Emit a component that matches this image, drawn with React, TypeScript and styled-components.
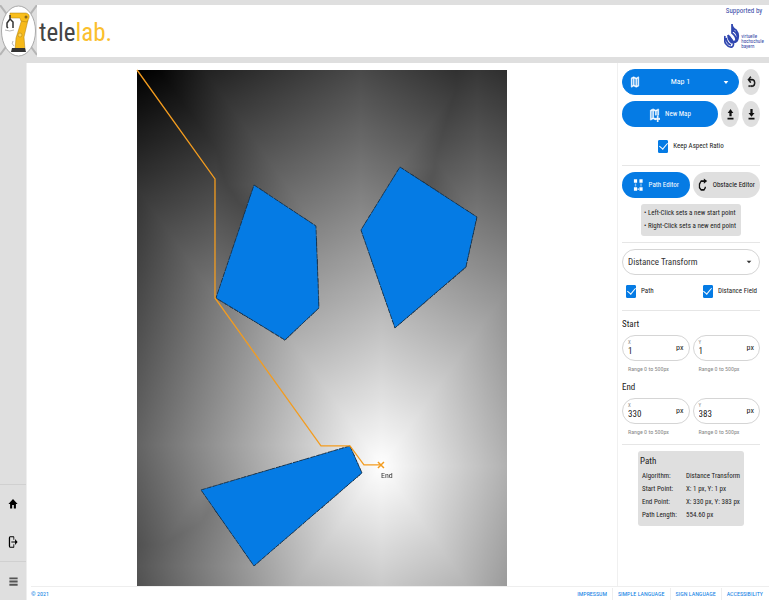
import React, { useLayoutEffect, useRef } from "react";
import styled, { createGlobalStyle } from "styled-components";

const BLUE = "#057be4";
const GREY = "#dfdfdf";
const ORANGE = "#f39c1f";

const Global = createGlobalStyle`
  * { box-sizing: border-box; }
  html, body, #root { height: 100%; margin: 0; }
  body { background: #fff; color: #222; font: 7px/12px "Roboto Condensed", "Liberation Sans Narrow", Roboto, sans-serif; }
  button, input, select { font: inherit; color: inherit; margin: 0; }
`;

const Page = styled.div`
  min-height: 100vh;
  display: flex;
  flex-direction: column;
`;

const Header = styled.header`
  display: flex;
  align-items: stretch;
  height: 63px;
  border-top: 5px solid ${GREY};
  border-bottom: 6px solid ${GREY};
  background: #fff;
`;

const LogoBox = styled.div`
  width: 37px;
  background: ${GREY};
  svg { display: block; width: 100%; height: 100%; }
`;

const Brand = styled.div`
  flex: 1;
  padding: 12px 0 0 2px;
  font-size: 25px;
  line-height: 32px;
  color: #444;
  span { color: #fbc02d; }
`;

const Sponsor = styled.div`
  display: flex;
  flex-direction: column;
  align-items: center;
  width: 44px;
  margin-right: 3px;
  padding-top: 1px;
  color: #3447a5;
  line-height: 11px;
`;

const SponsorRow = styled.div`
  display: flex;
  align-items: center;
  gap: 1px;
  padding-top: 6px;
  font-size: 5px;
  line-height: 5px;
  svg { width: 16px; height: 26px; }
  span { padding-top: 10px; }
`;

const Body = styled.div`
  flex: 1;
  display: flex;
  min-height: 0;
`;

const Sidebar = styled.nav`
  display: flex;
  flex-direction: column;
  justify-content: flex-end;
  width: 27px;
  background: ${GREY};
  border-right: 1px solid #eee;
`;

const SideGroup = styled.div`
  display: flex;
  flex-direction: column;
  border-top: 1px solid #d0d0d0;
`;

const SideButton = styled.button<{ $soft?: boolean }>`
  display: grid;
  place-items: center;
  height: 38px;
  padding: 0;
  border: 0;
  background: none;
  color: ${(p) => (p.$soft ? "#555" : "#000")};
`;

const Content = styled.div`
  flex: 1;
  display: flex;
  flex-direction: column;
  min-width: 0;
`;

const Workspace = styled.div`
  flex: 1;
  display: flex;
`;

const MapArea = styled.main`
  flex: 1;
  display: flex;
  justify-content: center;
  align-items: flex-start;
  padding-top: 7px;
`;

const Stage = styled.div`
  position: relative;
  width: 62.7%;
  aspect-ratio: 370 / 516;
  canvas, svg { position: absolute; inset: 0; width: 100%; height: 100%; display: block; }
  svg { overflow: visible; }
  text { font-size: 8px; fill: #333; }
`;

const Panel = styled.aside`
  width: 152px;
  padding: 6px 9px 0 4px;
  border-left: 1px solid #f0f0f0;
`;

const Section = styled.section<{ $pad: string; $gap?: number }>`
  display: flex;
  flex-direction: column;
  gap: ${(p) => p.$gap || 0}px;
  border-bottom: 1px solid #e6e6e6;
  padding: ${(p) => p.$pad};
`;

const Row = styled.div<{ $justify?: string }>`
  display: flex;
  align-items: center;
  justify-content: ${(p) => p.$justify || "flex-start"};
  gap: 3px;
`;

const Pill = styled.button<{ $plain?: boolean }>`
  flex: 1 1 0;
  display: flex;
  align-items: center;
  justify-content: center;
  gap: 5px;
  height: 26px;
  padding: 0;
  border: 0;
  border-radius: 13px;
  white-space: nowrap;
  background: ${(p) => (p.$plain ? GREY : BLUE)};
  color: ${(p) => (p.$plain ? "#111" : "#fff")};
`;

const RoundButton = styled.button`
  display: grid;
  place-items: center;
  width: 18px;
  height: 26px;
  padding: 0;
  border: 0;
  border-radius: 50%;
  background: ${GREY};
  color: #111;
`;

const SelectBox = styled.div<{ $filled?: boolean }>`
  flex: 1;
  display: flex;
  align-items: center;
  position: relative;
  height: 26px;
  border-radius: 13px;
  border: 1px solid ${(p) => (p.$filled ? BLUE : "#d5d5d5")};
  background: ${(p) => (p.$filled ? BLUE : "#fff")};
  color: ${(p) => (p.$filled ? "#fff" : "#333")};
  select {
    appearance: none;
    width: 100%;
    height: 100%;
    border: 0;
    outline: 0;
    background: none;
    padding: 0 5px;
    font-size: ${(p) => (p.$filled ? 8 : 9)}px;
    text-align-last: ${(p) => (p.$filled ? "center" : "left")};
  }
  svg { position: absolute; pointer-events: none; }
  svg.lead { left: 7px; }
  svg.caret { right: ${(p) => (p.$filled ? 8 : 6)}px; }
`;

const Check = styled.label<{ $inset?: boolean }>`
  display: flex;
  align-items: center;
  gap: 5px;
  height: 26px;
  padding: ${(p) => (p.$inset ? "0 3px 0 4px" : "0")};
  white-space: nowrap;
  input {
    appearance: none;
    display: grid;
    place-items: center;
    width: 10px;
    height: 13px;
    border-radius: 1px;
    border: 1px solid ${BLUE};
  }
  input:checked { background: ${BLUE}; }
  input:checked::after {
    content: "";
    width: 4px;
    height: 7px;
    margin-top: -2px;
    border: solid #fff;
    border-width: 0 1px 1px 0;
    transform: rotate(40deg);
  }
`;

const Hint = styled.ul`
  list-style: none;
  width: 100px;
  margin: 0 auto;
  padding: 3px 0 3px 3px;
  border-radius: 3px;
  background: ${GREY};
  line-height: 13px;
  white-space: nowrap;
`;

const Heading = styled.h3`
  margin: 0;
  font-size: 9px;
  font-weight: 400;
  line-height: 12px;
`;

const Fields = styled.div`
  display: flex;
  gap: 3px;
  margin: 5px 0 6px;
`;

const FieldWrap = styled.div`
  flex: 1;
  min-width: 0;
  small {
    display: block;
    padding: 2px 0 0 6px;
    font-size: 6px;
    color: #888;
    white-space: nowrap;
  }
`;

const FieldBox = styled.label`
  display: grid;
  grid-template-columns: 1fr auto;
  align-items: center;
  height: 26px;
  padding: 4px 5px;
  border: 1px solid #d5d5d5;
  border-radius: 13px;
  > span { grid-column: 1; font-size: 5px; line-height: 5px; color: #888; }
  > input {
    grid-column: 1;
    width: 100%;
    min-width: 0;
    padding: 0;
    border: 0;
    outline: 0;
    background: none;
    font-size: 9px;
    line-height: 10px;
    height: 10px;
  }
  > em { grid-column: 2; grid-row: 1 / 3; font-style: normal; font-size: 8px; }
`;

const Card = styled.div`
  width: 106px;
  margin: 6px 0 0 16px;
  padding: 4px 2px;
  border-radius: 3px;
  background: ${GREY};
  table { margin-top: 3px; border-collapse: collapse; line-height: 13px; white-space: nowrap; }
  th { text-align: left; font-weight: 400; padding: 0 0 0 2px; width: 46px; }
  td { padding: 0; }
`;

const Footer = styled.footer`
  display: flex;
  align-items: center;
  height: 14px;
  margin-left: 4px;
  border-top: 1px solid #eee;
  font-size: 6px;
  line-height: 12px;
  a { color: ${BLUE}; text-decoration: none; }
`;

const FooterLinks = styled.div`
  display: flex;
  margin-left: auto;
  padding-right: 1px;
  a { padding: 0 5px; }
  a + a { border-left: 1px solid #eee; }
`;

const icons = {
  map: "M20.5 3l-.16.03L15 5.1 9 3 3.36 4.9c-.21.07-.36.25-.36.48V20.5c0 .28.22.5.5.5l.16-.03L9 18.9l6 2.1 5.64-1.9c.21-.07.36-.25.36-.48V3.5c0-.28-.22-.5-.5-.5zM10 5.47l4 1.4v11.66l-4-1.4V5.47zm-5 .99l3-1.01v11.7l-3 1.16V6.46zm14 11.08l-3 1.01V6.86l3-1.16v11.84z",
  mapPlus: "M9 3L3.4 4.9 3 5.4V20.5l.5.5L9 18.9l5 1.7v-2.1l-4-1.4V5.5l4 1.4V13h2V6.9l3-1.2V13h2V3.5L20.5 3 15 5.1zM8 5.5v11.6l-3 1.2V6.5zM18 14v4h-4v2h4v4h2v-4h4v-2h-4v-4z",
  undo: "M13.5 7A6.5 6.5 0 0 1 20 13.5 6.5 6.5 0 0 1 13.5 20H10v-2h3.5C16 18 18 16 18 13.5S16 9 13.5 9H7.83l3.08 3.09L9.5 13.5 4 8l5.5-5.5 1.42 1.41L7.83 7zM6 18h2v2H6z",
  upload: "M9 15h6v-6h4.5L12 2 4.5 9H9zM4 18h16v3H4z",
  download: "M20 9h-5V2H9v7H4l8 7zM4 18h16v3H4z",
  home: "M10 21v-7h4v7h5v-9h4L12 2 1 12h4v9z",
  exit: "M15 8V4q0-2-2-2H5Q2 2 2 5v14q0 3 3 3h8q2 0 2-2v-4h-2v4H5V4h8v4zM8 11v2h9v4l6-5-6-5v4z",
  menu: "M1 3h22v4H1zM1 10h22v4H1zM1 17h22v4H1z",
  caret: "M5 8h14l-7 8z",
  nodes: "M2 2h7v6H2zM14 2h7v6h-7zM2 16h7v6H2zM14 16h7v6h-7zM4 10h3v1H4zM4 13h3v1H4zM16 10h3v1h-3zM16 13h3v1h-3zM10 18h3v2h-3z",
  shape: "M14 4H7L2 10v7l5 5h8l4-5v-2h-3v1l-2 3H8l-3-3v-5l3-4h6v3l8-5-8-4z",
};

// Icons whose outlines get an extra stroke.
const bold = new Set(["map", "mapPlus", "undo"]);

interface IconProps {
  name: keyof typeof icons;
  w?: number;
  h?: number;
  className?: string;
}

function Icon({ name, w = 10, h = 14, className }: IconProps) {
  return (
    <svg className={className} width={w} height={h} viewBox="0 0 24 24" preserveAspectRatio="none" fill="currentColor" aria-hidden="true">
      <path d={icons[name]} stroke="currentColor" strokeWidth={bold.has(name) ? 1 : 0} />
    </svg>
  );
}

type Point = [number, number];

const VIEW_W = 370;
const VIEW_H = 516;
const GRID = 500;
const GOAL: Point = [330, 383];

const obstacles: Point[][] = [
  [[117, 115], [179, 156], [182, 238], [148, 270], [79, 228]],
  [[263, 97], [340, 147], [329, 197], [258, 258], [224, 160]],
  [[64, 420], [213, 376], [225, 403], [117, 496]],
];

const route: Point[] = [[0, 0], [78, 109], [78, 228], [184, 376], [213, 376], [227, 395], [244, 395]];

const toPoints = (pts: Point[]) => pts.map((p) => p.join(",")).join(" ");

// Chamfer distance transform: alternating sweeps until the field is stable.
function distanceField(blocked: Uint8Array) {
  const d = new Float64Array(GRID * GRID).fill(1e9);
  d[GOAL[1] * GRID + GOAL[0]] = 0;
  let changed = true;
  for (let pass = 0; changed && pass < 24; pass++) {
    changed = pass === 0;
    const s = pass % 2 ? -1 : 1;
    for (let j = 0; j < GRID; j++) {
      const y = s > 0 ? j : GRID - 1 - j;
      for (let i = 0; i < GRID; i++) {
        const x = s > 0 ? i : GRID - 1 - i;
        const k = y * GRID + x;
        if (blocked[k]) continue;
        let best = d[k];
        const relax = (nx: number, ny: number, cost: number) => {
          if (nx >= 0 && ny >= 0 && nx < GRID && ny < GRID) best = Math.min(best, d[ny * GRID + nx] + cost);
        };
        relax(x - s, y, 1);
        relax(x, y - s, 1);
        relax(x - s, y - s, Math.SQRT2);
        relax(x + s, y - s, Math.SQRT2);
        if (best < d[k]) {
          d[k] = best;
          changed = true;
        }
      }
    }
  }
  return d;
}

function MapView() {
  const ref = useRef<HTMLCanvasElement>(null);

  useLayoutEffect(() => {
    const ctx = ref.current!.getContext("2d")!;
    ctx.fillStyle = "#fff";
    ctx.fillRect(0, 0, GRID, GRID);
    ctx.fillStyle = "#000";
    obstacles.forEach((poly) => {
      ctx.beginPath();
      poly.forEach(([x, y]) => ctx.lineTo((x / VIEW_W) * GRID, (y / VIEW_H) * GRID));
      ctx.closePath();
      ctx.fill();
    });
    const img = ctx.getImageData(0, 0, GRID, GRID);
    const blocked = new Uint8Array(GRID * GRID);
    for (let k = 0; k < blocked.length; k++) blocked[k] = img.data[k * 4] < 128 ? 1 : 0;
    const d = distanceField(blocked);
    let max = 0;
    d.forEach((v) => { if (v < 1e8 && v > max) max = v; });
    d.forEach((v, k) => {
      const c = blocked[k] ? 0 : 255 * (1 - v / max);
      img.data[k * 4] = img.data[k * 4 + 1] = img.data[k * 4 + 2] = c;
    });
    ctx.putImageData(img, 0, 0);
  }, []);

  return (
    <Stage>
      <canvas ref={ref} width={GRID} height={GRID} />
      <svg viewBox={`0 0 ${VIEW_W} ${VIEW_H}`} role="img" aria-label="Path map">
        {obstacles.map((poly, i) => (
          <polygon key={i} points={toPoints(poly)} fill={BLUE} stroke="#1b3145" strokeWidth="0.8" strokeDasharray="5 1" />
        ))}
        <polyline points={toPoints(route)} fill="none" stroke={ORANGE} strokeWidth="1.3" />
        <path d="M241 392l6 6M241 398l6-6" stroke={ORANGE} strokeWidth="1.5" />
        <text x="244" y="408">End</text>
      </svg>
    </Stage>
  );
}

function Field({ label, value }: { label: string; value: number }) {
  return (
    <FieldWrap>
      <FieldBox>
        <span>{label}</span>
        <input type="text" inputMode="numeric" defaultValue={value} />
        <em>px</em>
      </FieldBox>
      <small>Range 0 to 500px</small>
    </FieldWrap>
  );
}

function RobotLogo() {
  return (
    <svg viewBox="0 0 37 52" preserveAspectRatio="none" aria-label="telelab logo" role="img">
      <path d="M0 0l37 50M37 0L0 50" stroke="#b5b5b5" strokeWidth="2" />
      <ellipse cx="18.5" cy="26" rx="17" ry="25" fill="#fff" stroke="#aaa" />
      <path d="M15 45l1-12 6-19 6 1-4 17 1 13z" fill="#f6b91a" stroke="#a97c10" strokeWidth=".5" />
      <path d="M10 8h16q4 1 3 5l-2 4-6-1-1-3H10z" fill="#f9be1c" stroke="#a97c10" strokeWidth=".5" />
      <circle cx="26" cy="12" r="1.5" fill="#8a6a1a" />
      <circle cx="20" cy="30" r="2" fill="#ffd75e" stroke="#a97c10" strokeWidth=".5" />
      <path d="M10 10v5M10 14l-3 4v4l1 1M10 14l3 3v6" fill="none" stroke="#333" strokeWidth="1.5" />
      <path d="M5 25q5 2 9 0M13 36q-2 3 1 5" fill="none" stroke="#999" strokeWidth=".7" />
      <path d="M12 43h13l1 4H11z" fill="#333" />
    </svg>
  );
}

function UniversityMark() {
  return (
    <svg viewBox="0 0 16 26" fill="none" stroke="#3047b0" strokeWidth="1.7" aria-hidden="true">
      <path d="M8 1v9q4 3 4 7 0 2-2 1M8 1q0 4 4 6 4 5 1 11-3 3-5-1L5 13M8 5q1 3 4 5 2 3 1 6" />
      <path d="M1 13q-1 6 1 8 3 4 6 3 3-2 0-6L4 12M2 15q1 6 5 7M4 12q0 5 4 8" />
    </svg>
  );
}

export default function App() {
  return (
    <Page>
      <Global />
      <Header>
        <LogoBox><RobotLogo /></LogoBox>
        <Brand>tele<span>lab.</span></Brand>
        <Sponsor>
          Supported by
          <SponsorRow>
            <UniversityMark />
            <span>virtuelle<br />hochschule<br />bayern</span>
          </SponsorRow>
        </Sponsor>
      </Header>
      <Body>
        <Sidebar aria-label="Main">
          <SideGroup>
            <SideButton aria-label="Home"><Icon name="home" w={10} h={12} /></SideButton>
            <SideButton aria-label="Log out"><Icon name="exit" w={10} h={14} /></SideButton>
          </SideGroup>
          <SideGroup>
            <SideButton $soft aria-label="Menu"><Icon name="menu" w={9} h={11} /></SideButton>
          </SideGroup>
        </Sidebar>
        <Content>
          <Workspace>
            <MapArea><MapView /></MapArea>
            <Panel>
              <Section $pad="0 0 6px" $gap={6}>
                <Row>
                  <SelectBox $filled>
                    <Icon name="map" className="lead" />
                    <select aria-label="Map" defaultValue="Map 1"><option>Map 1</option></select>
                    <Icon name="caret" w={8} h={9} className="caret" />
                  </SelectBox>
                  <RoundButton aria-label="Undo"><Icon name="undo" w={11} h={14} /></RoundButton>
                </Row>
                <Row>
                  <Pill><Icon name="mapPlus" w={11} h={15} />New Map</Pill>
                  <RoundButton aria-label="Upload"><Icon name="upload" w={9} h={13} /></RoundButton>
                  <RoundButton aria-label="Download"><Icon name="download" w={9} h={13} /></RoundButton>
                </Row>
                <Row $justify="center">
                  <Check><input type="checkbox" defaultChecked />Keep Aspect Ratio</Check>
                </Row>
              </Section>
              <Section $pad="6px 0" $gap={6}>
                <Row>
                  <Pill><Icon name="nodes" w={11} />Path Editor</Pill>
                  <Pill $plain><Icon name="shape" />Obstacle Editor</Pill>
                </Row>
                <Hint>
                  <li>• Left-Click sets a new start point</li>
                  <li>• Right-Click sets a new end point</li>
                </Hint>
              </Section>
              <Section $pad="6px 0" $gap={3}>
                <Row>
                  <SelectBox>
                    <select aria-label="Algorithm" defaultValue="Distance Transform"><option>Distance Transform</option></select>
                    <Icon name="caret" w={8} h={8} className="caret" />
                  </SelectBox>
                </Row>
                <Row $justify="space-between">
                  <Check $inset><input type="checkbox" defaultChecked />Path</Check>
                  <Check $inset><input type="checkbox" defaultChecked />Distance Field</Check>
                </Row>
              </Section>
              <Section $pad="7px 0 0">
                <Heading>Start</Heading>
                <Fields><Field label="X" value={1} /><Field label="Y" value={1} /></Fields>
                <Heading>End</Heading>
                <Fields><Field label="X" value={330} /><Field label="Y" value={383} /></Fields>
              </Section>
              <Card>
                <Heading>Path</Heading>
                <table>
                  <tbody>
                    <tr><th scope="row">Algorithm:</th><td>Distance Transform</td></tr>
                    <tr><th scope="row">Start Point:</th><td>X: 1 px, Y: 1 px</td></tr>
                    <tr><th scope="row">End Point:</th><td>X: 330 px, Y: 383 px</td></tr>
                    <tr><th scope="row">Path Length:</th><td>554.60 px</td></tr>
                  </tbody>
                </table>
              </Card>
            </Panel>
          </Workspace>
          <Footer>
            <a href="#top">© 2021</a>
            <FooterLinks>
              <a href="#impressum">IMPRESSUM</a>
              <a href="#simple">SIMPLE LANGUAGE</a>
              <a href="#sign">SIGN LANGUAGE</a>
              <a href="#accessibility">ACCESSIBILITY</a>
            </FooterLinks>
          </Footer>
        </Content>
      </Body>
    </Page>
  );
}
